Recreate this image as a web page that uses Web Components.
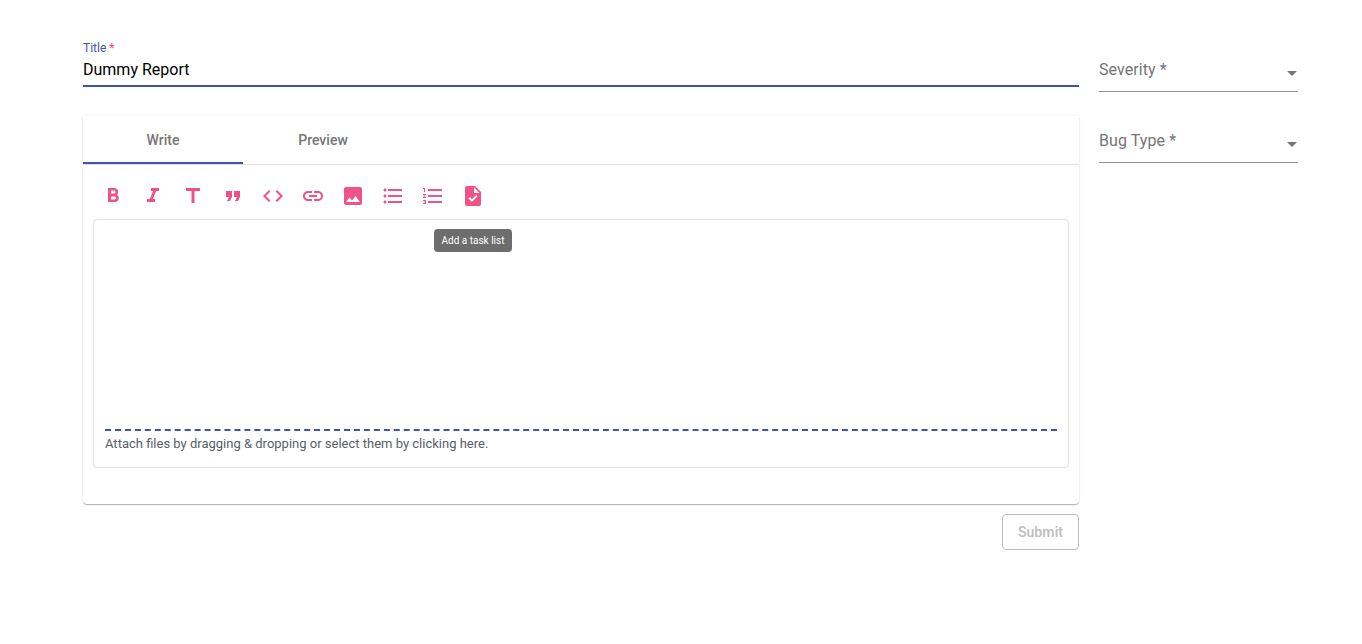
<!DOCTYPE html>
<html>
<head>
<meta charset="utf-8">
<title>Report</title>
<style>
  html, body { margin: 0; padding: 0; background: #fff; font-family: Roboto, "Liberation Sans", sans-serif; }
</style>
</head>
<body>
<report-form></report-form>

<script>
class TitleField extends HTMLElement {
    constructor() {
        super();
        this.attachShadow({ mode: 'open' });
        this.shadowRoot.innerHTML = `
            <style>
                :host { display: block; height: 47px; padding-top: 1px; box-sizing: border-box; }
                .label { font-size: 12px; line-height: 14px; color: #3f51b5; height: 14px; }
                .label span { color: #f50057; opacity: .8; }
                .value { font-size: 16px; line-height: 19px; color: #000; margin-top: 5px; padding-bottom: 6px; border-bottom: 2px solid #3f51b5; }
            </style>
            <div class="label">${this.getAttribute('label')} <span>*</span></div>
            <div class="value">${this.getAttribute('value')}</div>
        `;
    }
}

class SelectField extends HTMLElement {
    constructor() {
        super();
        this.attachShadow({ mode: 'open' });
        this.shadowRoot.innerHTML = `
            <style>
                :host { display: block; height: 52px; box-sizing: border-box; border-bottom: 1px solid #949494; position: relative; }
                .label { font-size: 16px; line-height: 19px; color: #757575; letter-spacing: 0.08px; padding-top: 20px; }
                svg { position: absolute; right: -6px; top: 21px; width: 24px; height: 24px; fill: #757575; }
            </style>
            <div class="label">${this.getAttribute('label')} *</div>
            <svg viewBox="0 0 24 24"><path d="M7 10l5 5 5-5z"/></svg>
        `;
    }
}

class ToolIcon extends HTMLElement {
    constructor() {
        super();
        this.attachShadow({ mode: 'open' });
        this.shadowRoot.innerHTML = `
            <style>
                :host { display: flex; width: 40px; height: 40px; align-items: center; justify-content: center; position: relative; }
                svg { width: 24px; height: 24px; fill: #ef5285; }
                .tip {
                    position: absolute; top: 53px; left: -19px; width: 78px; height: 23px; box-sizing: border-box;
                    background: #6d6d6d; color: #fff; border-radius: 4px; font-size: 10px; line-height: 23px;
                    text-align: center; white-space: nowrap;
                }
            </style>
            <svg viewBox="0 0 24 24"><path d="${this.getAttribute('d')}"/></svg>
            ${this.hasAttribute('tip') ? `<div class="tip">${this.getAttribute('tip')}</div>` : ''}
        `;
    }
}

class EditorToolbar extends HTMLElement {
    constructor() {
        super();
        this.attachShadow({ mode: 'open' });
        this.shadowRoot.innerHTML = `
            <style>
                :host { display: flex; height: 40px; padding-bottom: 3px; }
            </style>
            <slot></slot>
        `;
    }
}

class EditorTabs extends HTMLElement {
    constructor() {
        super();
        this.attachShadow({ mode: 'open' });
        this.shadowRoot.innerHTML = `
            <style>
                :host { display: flex; height: 48px; border-bottom: 1px solid #e0e0e0; }
                div {
                    width: 160px; height: 48px; box-sizing: border-box; text-align: center;
                    font-size: 14px; font-weight: 500; line-height: 48px; color: #757575;
                }
                .active { border-bottom: 2px solid #3f51b5; }
            </style>
            <div class="active">Write</div>
            <div>Preview</div>
        `;
    }
}

class DropArea extends HTMLElement {
    constructor() {
        super();
        this.attachShadow({ mode: 'open' });
        this.shadowRoot.innerHTML = `
            <style>
                :host {
                    display: flex; flex-direction: column; justify-content: flex-end; height: 249px; box-sizing: border-box;
                    border: 1px solid #e0e0e0; border-radius: 4px; padding: 0 11px 16px;
                }
                .rule { border-top: 2px dashed #3f51b5; }
                .hint { font-size: 13px; line-height: 15px; color: #586069; margin-top: 5px; }
            </style>
            <div class="rule"></div>
            <div class="hint"><slot></slot></div>
        `;
    }
}

class EditorCard extends HTMLElement {
    constructor() {
        super();
        this.attachShadow({ mode: 'open' });
        this.shadowRoot.innerHTML = `
            <style>
                :host {
                    display: block; height: 388px; box-sizing: border-box; background: #fff; border-radius: 0 0 4px 4px;
                    box-shadow: 0 1px 1px -1px rgba(0,0,0,.2), 0 1px 1px 0 rgba(0,0,0,.28), 0 0 3px 0 rgba(0,0,0,.07);
                }
                .body { padding: 11px 10px 0; }
            </style>
            <editor-tabs></editor-tabs>
            <div class="body"><slot></slot></div>
        `;
    }
}

class SubmitButton extends HTMLElement {
    constructor() {
        super();
        this.attachShadow({ mode: 'open' });
        this.shadowRoot.innerHTML = `
            <style>
                :host {
                    display: block; width: 77px; height: 36px; box-sizing: border-box; border: 1px solid #bdbdbd; border-radius: 4px;
                    font-size: 14px; font-weight: 500; line-height: 34px; text-align: center; color: #bdbdbd; letter-spacing: 0.1px;
                }
            </style>
            <slot></slot>
        `;
    }
}

class ReportForm extends HTMLElement {
    constructor() {
        super();
        this.attachShadow({ mode: 'open' });
        const icons = [
            'M15.6 10.79c.97-.67 1.65-1.77 1.65-2.79 0-2.26-1.75-4-4-4H7v14h7.04c2.09 0 3.71-1.7 3.71-3.79 0-1.52-.86-2.82-2.15-3.42zM10 6.5h3c.83 0 1.5.67 1.5 1.5s-.67 1.5-1.5 1.5h-3v-3zm3.5 9H10v-3h3.5c.83 0 1.5.67 1.5 1.5s-.67 1.5-1.5 1.5z',
            'M10 4v3h2.21l-3.42 8H6v3h8v-3h-2.21l3.42-8H18V4z',
            'M5 4v3h5.5v12h3V7H19V4z',
            'M6 17h3l2-4V7H5v6h3zm8 0h3l2-4V7h-6v6h3z',
            'M9.4 16.6L4.8 12l4.6-4.6L8 6l-6 6 6 6 1.4-1.4zm5.2 0l4.6-4.6-4.6-4.6L16 6l6 6-6 6-1.4-1.4z',
            'M3.9 12c0-1.71 1.39-3.1 3.1-3.1h4V7H7c-2.76 0-5 2.24-5 5s2.24 5 5 5h4v-1.9H7c-1.71 0-3.1-1.39-3.1-3.1zM8 13h8v-2H8v2zm9-6h-4v1.9h4c1.71 0 3.1 1.39 3.1 3.1s-1.39 3.1-3.1 3.1h-4V17h4c2.76 0 5-2.24 5-5s-2.24-5-5-5z',
            'M21 19V5c0-1.1-.9-2-2-2H5c-1.1 0-2 .9-2 2v14c0 1.1.9 2 2 2h14c1.1 0 2-.9 2-2zM8.5 13.5l2.5 3.01L14.5 12l4.5 6H5l3.5-4.5z',
            'M4 10.5c-.83 0-1.5.67-1.5 1.5s.67 1.5 1.5 1.5 1.5-.67 1.5-1.5-.67-1.5-1.5-1.5zm0-6c-.83 0-1.5.67-1.5 1.5S3.17 7.5 4 7.5 5.5 6.83 5.5 6 4.83 4.5 4 4.5zm0 12c-.83 0-1.5.68-1.5 1.5s.68 1.5 1.5 1.5 1.5-.68 1.5-1.5-.67-1.5-1.5-1.5zM7 19h14v-2H7v2zm0-6h14v-2H7v2zm0-8v2h14V5H7z',
            'M2 17h2v.5H3v1h1v.5H2v1h3v-4H2v1zm1-9h1V4H2v1h1v3zm-1 3h1.8L2 13.1v.9h3v-1H3.2L5 10.9V10H2v1zm5-6v2h14V5H7zm0 14h14v-2H7v2zm0-6h14v-2H7v2z',
            'M14 2H6c-1.1 0-1.99.9-1.99 2L4 20c0 1.1.89 2 1.99 2H18c1.1 0 2-.9 2-2V8l-6-6zm-3.06 16L7.4 14.46l1.41-1.41 2.12 2.12 4.24-4.24 1.41 1.41L10.94 18zM13 9V3.5L18.5 9H13z'
        ];
        const tools = icons.map((d, i) =>
            `<tool-icon d="${d}"${i === icons.length - 1 ? ' tip="Add a task list"' : ''}></tool-icon>`
        ).join('');
        this.shadowRoot.innerHTML = `
            <style>
                :host {
                    display: grid; grid-template-columns: 996px 199px; column-gap: 20px; align-items: start;
                    padding: 40px 0 0 83px; height: 604px; font-family: Roboto, "Liberation Sans", sans-serif;
                }
                .main { display: flex; flex-direction: column; }
                title-field { margin-bottom: 29px; }
                .actions { display: flex; justify-content: flex-end; margin-top: 10px; }
                .side { display: flex; flex-direction: column; gap: 19px; }
            </style>
            <div class="main">
                <title-field label="Title" value="Dummy Report"></title-field>
                <editor-card>
                    <editor-toolbar>${tools}</editor-toolbar>
                    <drop-area>Attach files by dragging &amp; dropping or select them by clicking here.</drop-area>
                </editor-card>
                <div class="actions"><submit-button>Submit</submit-button></div>
            </div>
            <div class="side">
                <select-field label="Severity"></select-field>
                <select-field label="Bug Type"></select-field>
            </div>
        `;
    }
}

customElements.define('title-field', TitleField);
customElements.define('select-field', SelectField);
customElements.define('tool-icon', ToolIcon);
customElements.define('editor-toolbar', EditorToolbar);
customElements.define('editor-tabs', EditorTabs);
customElements.define('drop-area', DropArea);
customElements.define('editor-card', EditorCard);
customElements.define('submit-button', SubmitButton);
customElements.define('report-form', ReportForm);
</script>
</body>
</html>
